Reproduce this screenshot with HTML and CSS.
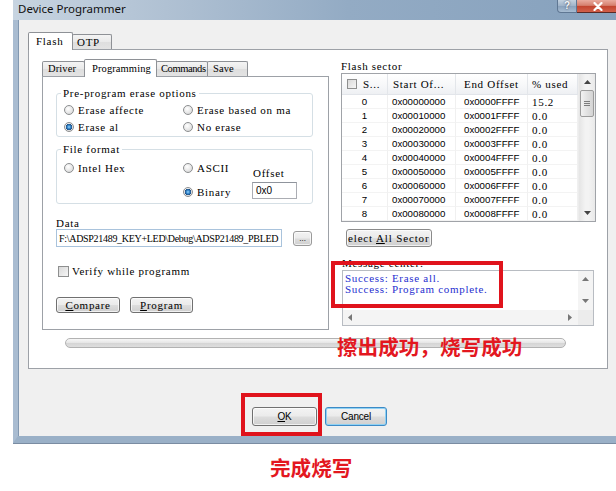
FILE: index.html
```html
<!DOCTYPE html>
<html>
<head>
<meta charset="utf-8">
<link rel="stylesheet" href="styles.css">
</head>
<body>
<div class="window">
  <div class="titlebar">
    <span class="title">Device Programmer</span>
    <div class="caption">
      <span class="cap-help">?</span>
      <span class="cap-close"><svg width="10" height="9" viewBox="0 0 10 9"><path d="M1.5 1 L8.5 8 M8.5 1 L1.5 8" stroke="#fff" stroke-width="2.2" stroke-linecap="round"/></svg></span>
    </div>
  </div>
  <div class="client">
    <div class="tabstrip">
      <div class="tab sel w-flash">Flash</div>
      <div class="tab w-otp">OTP</div>
    </div>
    <div class="panel outer">
      <div class="cols">
        <div class="leftcol">
          <div class="tabstrip inner-tabs">
            <div class="tab w-driver">Driver</div>
            <div class="tab sel w-prog">Programming</div>
            <div class="tab w-cmd">Commands</div>
            <div class="tab w-save">Save</div>
          </div>
          <div class="panel inner">
            <fieldset class="group g-erase">
              <legend>Pre-program erase options</legend>
              <div class="opt-grid">
                <div class="opt"><span class="radio"></span>Erase affecte</div>
                <div class="opt"><span class="radio"></span>Erase based on ma</div>
                <div class="opt"><span class="radio on"></span>Erase al</div>
                <div class="opt"><span class="radio"></span>No erase</div>
              </div>
            </fieldset>
            <fieldset class="group g-file">
              <legend>File format</legend>
              <div class="ff-grid">
                <div class="ff-col">
                  <div class="opt h16"><span class="radio"></span>Intel Hex</div>
                </div>
                <div class="ff-col gap8">
                  <div class="opt h16"><span class="radio"></span>ASCII</div>
                  <div class="opt h16"><span class="radio on"></span>Binary</div>
                </div>
                <div class="ff-col offset-col">
                  <div class="offset-label">Offset</div>
                  <div class="field offset-field">0x0</div>
                </div>
              </div>
            </fieldset>
            <div class="data-label">Data</div>
            <div class="data-row">
              <div class="field data-field">F:\ADSP21489_KEY+LED\Debug\ADSP21489_PBLED</div>
              <div class="btn btn-browse">...</div>
            </div>
            <div class="check-row"><span class="checkbox"></span>Verify while programm</div>
            <div class="btn-row">
              <div class="btn btn-compare"><span><u>C</u>ompare</span></div>
              <div class="btn btn-program"><span><u>P</u>rogram</span></div>
            </div>
          </div>
        </div>
        <div class="rightcol">
          <div class="sector-label">Flash sector</div>
          <div class="sector-list">
            <div class="grid">
              <div class="row head">
                <div class="cell c1"><span class="checkbox small"></span>S...</div>
                <div class="cell c2">Start Of...</div>
                <div class="cell c3">End Offset</div>
                <div class="cell c4">% used</div>
              </div>
              <div class="row"><div class="cell c1 num">0</div><div class="cell c2 num">0x00000000</div><div class="cell c3 num">0x0000FFFF</div><div class="cell c4">15.2</div></div>
              <div class="row"><div class="cell c1 num">1</div><div class="cell c2 num">0x00010000</div><div class="cell c3 num">0x0001FFFF</div><div class="cell c4">0.0</div></div>
              <div class="row"><div class="cell c1 num">2</div><div class="cell c2 num">0x00020000</div><div class="cell c3 num">0x0002FFFF</div><div class="cell c4">0.0</div></div>
              <div class="row"><div class="cell c1 num">3</div><div class="cell c2 num">0x00030000</div><div class="cell c3 num">0x0003FFFF</div><div class="cell c4">0.0</div></div>
              <div class="row"><div class="cell c1 num">4</div><div class="cell c2 num">0x00040000</div><div class="cell c3 num">0x0004FFFF</div><div class="cell c4">0.0</div></div>
              <div class="row"><div class="cell c1 num">5</div><div class="cell c2 num">0x00050000</div><div class="cell c3 num">0x0005FFFF</div><div class="cell c4">0.0</div></div>
              <div class="row"><div class="cell c1 num">6</div><div class="cell c2 num">0x00060000</div><div class="cell c3 num">0x0006FFFF</div><div class="cell c4">0.0</div></div>
              <div class="row"><div class="cell c1 num">7</div><div class="cell c2 num">0x00070000</div><div class="cell c3 num">0x0007FFFF</div><div class="cell c4">0.0</div></div>
              <div class="row"><div class="cell c1 num">8</div><div class="cell c2 num">0x00080000</div><div class="cell c3 num">0x0008FFFF</div><div class="cell c4">0.0</div></div>
            </div>
            <div class="vscroll">
              <div class="sb-btn"><svg width="7" height="4" viewBox="0 0 7 4"><path d="M0 4 L3.5 0 L7 4Z" fill="#444"/></svg></div>
              <div class="sb-thumb"><span></span><span></span><span></span></div>
              <div class="sb-track"></div>
              <div class="sb-btn"><svg width="7" height="4" viewBox="0 0 7 4"><path d="M0 0 L3.5 4 L7 0Z" fill="#444"/></svg></div>
            </div>
          </div>
          <div class="btn btn-select"><span>elect <u>A</u>ll Sector</span></div>
          <div class="msg-label">Message center:</div>
          <div class="msgbox">
            <div class="msgtext">Success: Erase all.
Success: Program complete.</div>
            <div class="mvscroll">
              <svg width="7" height="4" viewBox="0 0 7 4"><path d="M0 4 L3.5 0 L7 4Z" fill="#777"/></svg>
              <svg width="7" height="4" viewBox="0 0 7 4"><path d="M0 0 L3.5 4 L7 0Z" fill="#777"/></svg>
            </div>
            <div class="mhscroll">
              <svg width="4" height="7" viewBox="0 0 4 7"><path d="M4 0 L0 3.5 L4 7Z" fill="#777"/></svg>
              <svg width="4" height="7" viewBox="0 0 4 7"><path d="M0 0 L4 3.5 L0 7Z" fill="#777"/></svg>
            </div>
            <div class="mcorner"></div>
          </div>
        </div>
      </div>
      <div class="progress"></div>
    </div>
    <div class="dlg-btns">
      <div class="btn dlg btn-ok"><span><u>O</u>K</span></div>
      <div class="btn dlg btn-cancel">Cancel</div>
    </div>
  </div>
</div>

<div class="mark mark-msg"></div>
<div class="mark mark-ok"></div>
<div class="note note-msg">擦出成功，烧写成功</div>
<div class="note note-ok">完成烧写</div>
</body>
</html>
```

FILE: styles.css
```css
html, body {
  margin: 0;
  padding: 0;
}
body {
  width: 616px;
  height: 491px;
  overflow: hidden;
  background: #fff;
  position: relative;
  font-family: "Liberation Serif", serif;
  font-size: 11px;
  letter-spacing: 0.7px;
  color: #000;
}
* { box-sizing: border-box; }

.window {
  margin-left: 13px;
  width: 610px;
  box-shadow: 0 1px 0 #7a8ca2;
}

/* title bar */
.titlebar {
  height: 20px;
  display: flex;
  align-items: flex-start;
  background: linear-gradient(to right, #c7d4e1 0%, #b0c1d3 25%, #93abc4 55%, #86a1bd 100%);
}
.title {
  font-family: "Noto Sans", sans-serif;
  font-size: 11.5px;
  letter-spacing: 0;
  line-height: 18px;
  padding-left: 5px;
  color: #101010;
}
.caption {
  margin-left: auto;
  margin-right: 3px;
  display: flex;
}
.cap-help {
  width: 20px;
  height: 13px;
  border: 1px solid #5f7793;
  border-top: none;
  border-radius: 0 0 0 4px;
  background: linear-gradient(#c3d1df, #9fb3c9 50%, #8aa2bc 51%, #a7bcd2);
  color: #f4f7fb;
  font-family: "Liberation Sans", sans-serif;
  font-weight: bold;
  font-size: 10px;
  letter-spacing: 0;
  line-height: 12px;
  text-align: center;
  text-shadow: 0 0 2px #334;
}
.cap-close {
  width: 43px;
  height: 13px;
  border: 1px solid #5a2a26;
  border-top: none;
  border-left: none;
  background: linear-gradient(#e9ab9f, #d6806f 45%, #c2442f 52%, #d2604a);
  display: flex;
  align-items: center;
  justify-content: center;
}

/* client area */
.client {
  background: #f0f0f0;
  border-left: 5px solid #a9bcd1;
  border-bottom: 7px solid #9ab0c7;
  box-shadow: inset 1px 0 0 #8298b1;
  padding: 12px 0 10px 10px;
}

/* tabs */
.tabstrip {
  display: flex;
  align-items: flex-end;
  height: 17px;
}
.tab {
  height: 15px;
  line-height: 14px;
  padding-left: 5px;
  border: 1px solid #8e9196;
  border-bottom: none;
  border-radius: 2px 2px 0 0;
  margin-right: -1px;
  background: linear-gradient(#f4f4f4, #e9e9e9 50%, #dedede 51%, #e3e3e3);
  white-space: nowrap;
  overflow: hidden;
}
.tab.sel {
  height: 18px;
  line-height: 17px;
  margin-bottom: -1px;
  padding-left: 7px;
  background: #fff;
  position: relative;
  z-index: 1;
}
.inner-tabs .tab {
  font-size: 10.5px;
  letter-spacing: 0.1px;
}
.w-flash { width: 45px; }
.w-otp { width: 40px; padding-left: 4px; }
.w-driver { width: 43px; }
.w-prog { width: 73px; }
.inner-tabs .w-cmd { width: 52px; padding-left: 4px; letter-spacing: -0.4px; }
.w-save { width: 41px; }

/* panels */
.panel {
  border: 1px solid #9da1a7;
  background: #fff;
}
.panel.outer {
  width: 580px;
  padding: 9px 11px 20px 13px;
}
.cols {
  display: grid;
  grid-template-columns: 287px 255px;
  column-gap: 12px;
}
.panel.inner {
  padding: 10px 15px 16px 13px;
}

/* group boxes */
.group {
  margin: 0;
  border: 1px solid #d5dfe5;
  border-radius: 3px;
  padding: 2px 0 1px 7px;
  min-width: 0;
}
.group legend {
  padding: 0 2px;
  margin-left: -3px;
  line-height: 12px;
}
.g-file {
  margin-top: 6px;
  padding: 5px 0 3px 7px;
}
.opt-grid {
  display: grid;
  grid-template-columns: 119px 1fr;
}
.opt {
  display: flex;
  align-items: center;
  height: 17px;
  white-space: nowrap;
}
.opt.h16 { height: 16px; }

.radio {
  flex: none;
  width: 10px;
  height: 10px;
  margin-right: 4px;
  border-radius: 50%;
  border: 1px solid #8c8e90;
  background: radial-gradient(circle at 40% 35%, #ffffff 0, #e4e4e4 60%, #cfcfcf 100%);
}
.radio.on {
  background:
    radial-gradient(circle at 50% 50%, #9fd8ff 0, #3b8fd2 1.5px, #1e4f86 3px, rgba(30,79,134,0) 3.4px),
    radial-gradient(circle at 40% 35%, #ffffff 0, #e4e4e4 60%, #cfcfcf 100%);
}
.checkbox {
  flex: none;
  width: 11px;
  height: 11px;
  margin-right: 3px;
  border: 1px solid #8e8f8f;
  background: linear-gradient(135deg, #d9d9d9, #f6f6f6);
}
.checkbox.small {
  width: 10px;
  height: 10px;
  margin-right: 6px;
}

.ff-grid {
  display: grid;
  grid-template-columns: 119px 69px 1fr;
}
.ff-col {
  display: flex;
  flex-direction: column;
}
.gap8 { gap: 8px; }
.offset-col { padding-top: 6px; }
.offset-label {
  line-height: 14px;
  padding-left: 1px;
}

/* inputs */
.field {
  display: flex;
  align-items: center;
  background: #fff;
  border: 1px solid #abadb3;
  border-top-color: #8f949c;
  white-space: nowrap;
  overflow: hidden;
}
.offset-field {
  margin-top: 2px;
  width: 45px;
  height: 17px;
  padding-left: 3px;
  letter-spacing: 0;
  font-family: "Liberation Sans", sans-serif;
  font-size: 10px;
}
.data-label {
  margin-top: 13px;
  line-height: 12px;
}
.data-row {
  display: flex;
  align-items: center;
}
.data-field {
  width: 226px;
  height: 18px;
  padding-left: 2px;
  border-color: #a9c3dc;
  font-size: 10px;
  letter-spacing: -0.3px;
}

/* buttons */
.btn {
  display: flex;
  align-items: center;
  justify-content: center;
  white-space: nowrap;
  border: 1px solid #707070;
  border-radius: 3px;
  background: linear-gradient(#f3f3f3 0%, #ebebeb 48%, #dddddd 52%, #cfcfcf 100%);
  box-shadow: inset 0 0 0 1px rgba(255,255,255,0.7);
}
.btn-browse {
  margin-left: 11px;
  width: 19px;
  height: 15px;
  border-color: #9a9a9a;
  font-size: 9px;
  letter-spacing: 0;
  line-height: 10px;
}
.check-row {
  display: flex;
  align-items: center;
  margin-top: 18px;
  height: 12px;
  padding-left: 2px;
}
.btn-row {
  display: flex;
  gap: 10px;
  margin-top: 20px;
}
.btn-compare { width: 64px; height: 16px; }
.btn-program { width: 63px; height: 16px; }

/* right column */
.sector-label {
  height: 14px;
  line-height: 14px;
}
.sector-list {
  display: flex;
  width: 255px;
  border: 1px solid #a0a3a8;
  background: #fff;
}
.grid {
  width: 236px;
}
.row {
  display: grid;
  grid-template-columns: 46px 68px 72px 50px;
  height: 14px;
}
.row.head {
  height: 21px;
  background: linear-gradient(#ffffff, #f6f7f9 60%, #eef0f3);
  border-bottom: 1px solid #e2e5ea;
}
.cell {
  display: flex;
  align-items: center;
  white-space: nowrap;
  overflow: hidden;
  border-right: 1px solid #f0f0f0;
  border-bottom: 1px solid #f3f3f3;
}
.head .cell {
  border-bottom: none;
  border-right: 1px solid #e3e6ea;
}
.head .c1 { padding-left: 5px; }
.head .c2 { padding-left: 5px; }
.head .c3 { padding-left: 8px; }
.head .c4 { padding-left: 4px; }
.c1.num { justify-content: center; }
.c2 { padding-left: 4px; }
.c3 { padding-left: 8px; }
.c4 { padding-left: 4px; }
.num {
  font-family: "Liberation Sans", sans-serif;
  font-size: 9.7px;
  letter-spacing: 0;
}

.vscroll {
  width: 17px;
  display: flex;
  flex-direction: column;
  background: linear-gradient(to right, #e5e5e5, #f3f3f3 40%, #f3f3f3 60%, #e9e9e9);
  border-left: 1px solid #ececec;
}
.sb-btn {
  height: 16px;
  display: flex;
  align-items: center;
  justify-content: center;
}
.sb-thumb {
  height: 27px;
  margin: 0 1px;
  border: 1px solid #9c9c9c;
  border-radius: 2px;
  background: linear-gradient(to right, #f2f2f2, #e2e2e2 50%, #d4d4d4);
  display: flex;
  flex-direction: column;
  align-items: center;
  justify-content: center;
  gap: 1px;
}
.sb-thumb span {
  width: 6px;
  height: 1px;
  background: #7d7d7d;
}
.sb-track { flex: 1; }

.btn-select {
  margin: 7px 0 0 5px;
  width: 86px;
  height: 18px;
  justify-content: flex-start;
  padding-left: 1px;
  border-color: #8a8a8a;
  letter-spacing: 0.85px;
}
.msg-label {
  margin-top: 10px;
  line-height: 12px;
  padding-left: 1px;
}
.msgbox {
  margin: 1px 0 0 1px;
  width: 252px;
  height: 56px;
  border: 1px solid #b8bcc2;
  background: #fff;
  display: grid;
  grid-template-columns: 1fr 15px;
  grid-template-rows: 1fr 15px;
}
.msgtext {
  color: #1f2fcf;
  padding: 2px 0 0 2px;
  line-height: 11px;
  white-space: pre;
  overflow: hidden;
}
.mvscroll {
  background: #f4f4f4;
  display: flex;
  flex-direction: column;
  align-items: center;
  justify-content: space-between;
  padding: 6px 0 7px;
}
.mhscroll {
  background: #f4f4f4;
  display: flex;
  align-items: center;
  justify-content: space-between;
  padding: 0 6px 0 5px;
}
.mcorner { background: #ececec; }

.progress {
  margin: 8px 0 0 23px;
  width: 501px;
  height: 10px;
  border: 1px solid #b2b2b2;
  border-radius: 5px;
  background: linear-gradient(#f7f7f7, #e7e7e7 45%, #d6d6d6 55%, #dedede);
}

/* dialog buttons */
.dlg-btns {
  display: flex;
  gap: 8px;
  margin: 38px 0 0 224px;
}
.btn.dlg {
  height: 19px;
  font-family: "Liberation Sans", sans-serif;
  font-size: 10px;
  letter-spacing: -0.2px;
}
.btn-ok { width: 65px; }
.btn-cancel {
  width: 62px;
  border-color: #3c8ac6;
  box-shadow: inset 0 0 0 1px #8fd1f3;
}

/* annotations */
.mark {
  position: absolute;
  border: 4px solid #e0131c;
}
.mark-msg {
  left: 331px;
  top: 261px;
  width: 172px;
  height: 47px;
}
.mark-ok {
  left: 241px;
  top: 393px;
  width: 81px;
  height: 43px;
}
.note {
  position: absolute;
  font-family: "Noto Sans CJK SC", sans-serif;
  font-weight: bold;
  font-size: 20.6px;
  line-height: 22px;
  letter-spacing: 0;
  color: #e3171f;
  white-space: nowrap;
}
.note-msg { left: 337px; top: 335px; }
.note-ok { left: 270px; top: 456px; }
```
